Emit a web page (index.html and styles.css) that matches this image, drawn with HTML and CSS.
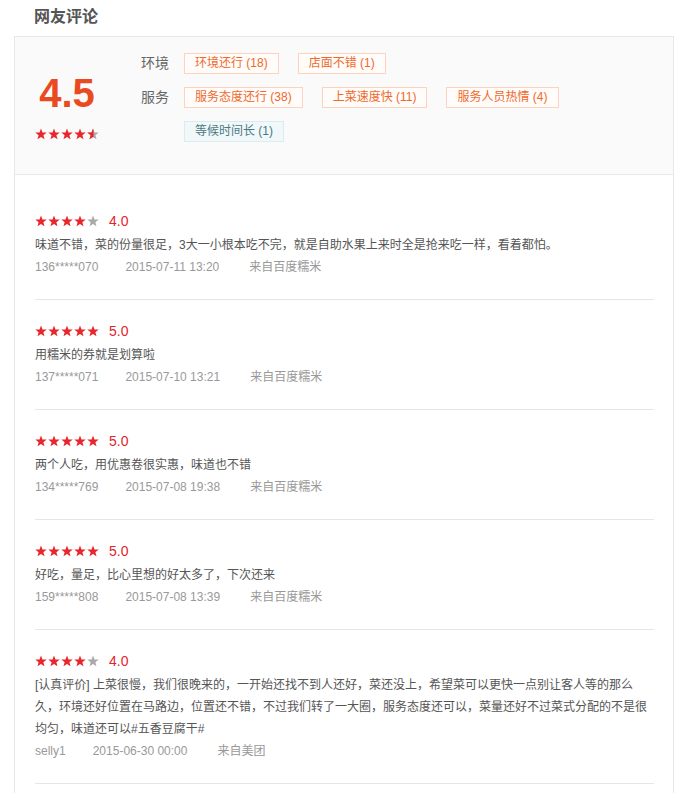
FILE: index.html
```html
<!DOCTYPE html>
<html lang="zh-CN">
<head>
<meta charset="utf-8">
<title>网友评论</title>
<link rel="stylesheet" href="styles.css">
</head>
<body>
<div class="page">
  <h2 class="title">网友评论</h2>
  <div class="card">
    <div class="summary">
      <div class="score">
        <div class="score-num">4.5</div>
        <div class="stars">
          <svg class="star" viewBox="0 0 24 24"><polygon points="12,0.8 14.94,8.75 23.41,9.09 16.76,14.35 19.05,22.5 12,17.8 4.95,22.5 7.24,14.35 0.59,9.09 9.06,8.75"/></svg>
          <svg class="star" viewBox="0 0 24 24"><polygon points="12,0.8 14.94,8.75 23.41,9.09 16.76,14.35 19.05,22.5 12,17.8 4.95,22.5 7.24,14.35 0.59,9.09 9.06,8.75"/></svg>
          <svg class="star" viewBox="0 0 24 24"><polygon points="12,0.8 14.94,8.75 23.41,9.09 16.76,14.35 19.05,22.5 12,17.8 4.95,22.5 7.24,14.35 0.59,9.09 9.06,8.75"/></svg>
          <svg class="star" viewBox="0 0 24 24"><polygon points="12,0.8 14.94,8.75 23.41,9.09 16.76,14.35 19.05,22.5 12,17.8 4.95,22.5 7.24,14.35 0.59,9.09 9.06,8.75"/></svg>
          <svg class="star star-half" viewBox="0 0 24 24"><defs><clipPath id="halfclip"><rect x="0" y="0" width="13" height="24"/></clipPath></defs><polygon class="off" points="12,0.8 14.94,8.75 23.41,9.09 16.76,14.35 19.05,22.5 12,17.8 4.95,22.5 7.24,14.35 0.59,9.09 9.06,8.75"/><polygon clip-path="url(#halfclip)" points="12,0.8 14.94,8.75 23.41,9.09 16.76,14.35 19.05,22.5 12,17.8 4.95,22.5 7.24,14.35 0.59,9.09 9.06,8.75"/></svg>
        </div>
      </div>
      <div class="tags">
        <div class="tag-row">
          <span class="tag-label">环境</span>
          <span class="tag">环境还行 (18)</span>
          <span class="tag">店面不错 (1)</span>
        </div>
        <div class="tag-row">
          <span class="tag-label">服务</span>
          <span class="tag">服务态度还行 (38)</span>
          <span class="tag">上菜速度快 (11)</span>
          <span class="tag">服务人员热情 (4)</span>
        </div>
        <div class="tag-row">
          <span class="tag-label"></span>
          <span class="tag tag-neg">等候时间长 (1)</span>
        </div>
      </div>
    </div>

    <div class="reviews">
      <div class="review">
        <div class="rating">
          <div class="stars">
            <svg class="star" viewBox="0 0 24 24"><polygon points="12,0.8 14.94,8.75 23.41,9.09 16.76,14.35 19.05,22.5 12,17.8 4.95,22.5 7.24,14.35 0.59,9.09 9.06,8.75"/></svg>
            <svg class="star" viewBox="0 0 24 24"><polygon points="12,0.8 14.94,8.75 23.41,9.09 16.76,14.35 19.05,22.5 12,17.8 4.95,22.5 7.24,14.35 0.59,9.09 9.06,8.75"/></svg>
            <svg class="star" viewBox="0 0 24 24"><polygon points="12,0.8 14.94,8.75 23.41,9.09 16.76,14.35 19.05,22.5 12,17.8 4.95,22.5 7.24,14.35 0.59,9.09 9.06,8.75"/></svg>
            <svg class="star" viewBox="0 0 24 24"><polygon points="12,0.8 14.94,8.75 23.41,9.09 16.76,14.35 19.05,22.5 12,17.8 4.95,22.5 7.24,14.35 0.59,9.09 9.06,8.75"/></svg>
            <svg class="star star-off" viewBox="0 0 24 24"><polygon points="12,0.8 14.94,8.75 23.41,9.09 16.76,14.35 19.05,22.5 12,17.8 4.95,22.5 7.24,14.35 0.59,9.09 9.06,8.75"/></svg>
          </div>
          <span class="rating-num">4.0</span>
        </div>
        <p class="comment">味道不错，菜的份量很足，3大一小根本吃不完，就是自助水果上来时全是抢来吃一样，看着都怕。</p>
        <div class="meta"><span class="user">136*****070</span><span class="time">2015-07-11 13:20</span><span class="source">来自百度糯米</span></div>
      </div>

      <div class="review">
        <div class="rating">
          <div class="stars">
            <svg class="star" viewBox="0 0 24 24"><polygon points="12,0.8 14.94,8.75 23.41,9.09 16.76,14.35 19.05,22.5 12,17.8 4.95,22.5 7.24,14.35 0.59,9.09 9.06,8.75"/></svg>
            <svg class="star" viewBox="0 0 24 24"><polygon points="12,0.8 14.94,8.75 23.41,9.09 16.76,14.35 19.05,22.5 12,17.8 4.95,22.5 7.24,14.35 0.59,9.09 9.06,8.75"/></svg>
            <svg class="star" viewBox="0 0 24 24"><polygon points="12,0.8 14.94,8.75 23.41,9.09 16.76,14.35 19.05,22.5 12,17.8 4.95,22.5 7.24,14.35 0.59,9.09 9.06,8.75"/></svg>
            <svg class="star" viewBox="0 0 24 24"><polygon points="12,0.8 14.94,8.75 23.41,9.09 16.76,14.35 19.05,22.5 12,17.8 4.95,22.5 7.24,14.35 0.59,9.09 9.06,8.75"/></svg>
            <svg class="star" viewBox="0 0 24 24"><polygon points="12,0.8 14.94,8.75 23.41,9.09 16.76,14.35 19.05,22.5 12,17.8 4.95,22.5 7.24,14.35 0.59,9.09 9.06,8.75"/></svg>
          </div>
          <span class="rating-num">5.0</span>
        </div>
        <p class="comment">用糯米的券就是划算啦</p>
        <div class="meta"><span class="user">137*****071</span><span class="time">2015-07-10 13:21</span><span class="source">来自百度糯米</span></div>
      </div>

      <div class="review">
        <div class="rating">
          <div class="stars">
            <svg class="star" viewBox="0 0 24 24"><polygon points="12,0.8 14.94,8.75 23.41,9.09 16.76,14.35 19.05,22.5 12,17.8 4.95,22.5 7.24,14.35 0.59,9.09 9.06,8.75"/></svg>
            <svg class="star" viewBox="0 0 24 24"><polygon points="12,0.8 14.94,8.75 23.41,9.09 16.76,14.35 19.05,22.5 12,17.8 4.95,22.5 7.24,14.35 0.59,9.09 9.06,8.75"/></svg>
            <svg class="star" viewBox="0 0 24 24"><polygon points="12,0.8 14.94,8.75 23.41,9.09 16.76,14.35 19.05,22.5 12,17.8 4.95,22.5 7.24,14.35 0.59,9.09 9.06,8.75"/></svg>
            <svg class="star" viewBox="0 0 24 24"><polygon points="12,0.8 14.94,8.75 23.41,9.09 16.76,14.35 19.05,22.5 12,17.8 4.95,22.5 7.24,14.35 0.59,9.09 9.06,8.75"/></svg>
            <svg class="star" viewBox="0 0 24 24"><polygon points="12,0.8 14.94,8.75 23.41,9.09 16.76,14.35 19.05,22.5 12,17.8 4.95,22.5 7.24,14.35 0.59,9.09 9.06,8.75"/></svg>
          </div>
          <span class="rating-num">5.0</span>
        </div>
        <p class="comment">两个人吃，用优惠卷很实惠，味道也不错</p>
        <div class="meta"><span class="user">134*****769</span><span class="time">2015-07-08 19:38</span><span class="source">来自百度糯米</span></div>
      </div>

      <div class="review">
        <div class="rating">
          <div class="stars">
            <svg class="star" viewBox="0 0 24 24"><polygon points="12,0.8 14.94,8.75 23.41,9.09 16.76,14.35 19.05,22.5 12,17.8 4.95,22.5 7.24,14.35 0.59,9.09 9.06,8.75"/></svg>
            <svg class="star" viewBox="0 0 24 24"><polygon points="12,0.8 14.94,8.75 23.41,9.09 16.76,14.35 19.05,22.5 12,17.8 4.95,22.5 7.24,14.35 0.59,9.09 9.06,8.75"/></svg>
            <svg class="star" viewBox="0 0 24 24"><polygon points="12,0.8 14.94,8.75 23.41,9.09 16.76,14.35 19.05,22.5 12,17.8 4.95,22.5 7.24,14.35 0.59,9.09 9.06,8.75"/></svg>
            <svg class="star" viewBox="0 0 24 24"><polygon points="12,0.8 14.94,8.75 23.41,9.09 16.76,14.35 19.05,22.5 12,17.8 4.95,22.5 7.24,14.35 0.59,9.09 9.06,8.75"/></svg>
            <svg class="star" viewBox="0 0 24 24"><polygon points="12,0.8 14.94,8.75 23.41,9.09 16.76,14.35 19.05,22.5 12,17.8 4.95,22.5 7.24,14.35 0.59,9.09 9.06,8.75"/></svg>
          </div>
          <span class="rating-num">5.0</span>
        </div>
        <p class="comment">好吃，量足，比心里想的好太多了，下次还来</p>
        <div class="meta"><span class="user">159*****808</span><span class="time">2015-07-08 13:39</span><span class="source">来自百度糯米</span></div>
      </div>

      <div class="review">
        <div class="rating">
          <div class="stars">
            <svg class="star" viewBox="0 0 24 24"><polygon points="12,0.8 14.94,8.75 23.41,9.09 16.76,14.35 19.05,22.5 12,17.8 4.95,22.5 7.24,14.35 0.59,9.09 9.06,8.75"/></svg>
            <svg class="star" viewBox="0 0 24 24"><polygon points="12,0.8 14.94,8.75 23.41,9.09 16.76,14.35 19.05,22.5 12,17.8 4.95,22.5 7.24,14.35 0.59,9.09 9.06,8.75"/></svg>
            <svg class="star" viewBox="0 0 24 24"><polygon points="12,0.8 14.94,8.75 23.41,9.09 16.76,14.35 19.05,22.5 12,17.8 4.95,22.5 7.24,14.35 0.59,9.09 9.06,8.75"/></svg>
            <svg class="star" viewBox="0 0 24 24"><polygon points="12,0.8 14.94,8.75 23.41,9.09 16.76,14.35 19.05,22.5 12,17.8 4.95,22.5 7.24,14.35 0.59,9.09 9.06,8.75"/></svg>
            <svg class="star star-off" viewBox="0 0 24 24"><polygon points="12,0.8 14.94,8.75 23.41,9.09 16.76,14.35 19.05,22.5 12,17.8 4.95,22.5 7.24,14.35 0.59,9.09 9.06,8.75"/></svg>
          </div>
          <span class="rating-num">4.0</span>
        </div>
        <p class="comment">[认真评价] 上菜很慢，我们很晚来的，一开始还找不到人还好，菜还没上，希望菜可以更快一点别让客人等的那么久，环境还好位置在马路边，位置还不错，不过我们转了一大圈，服务态度还可以，菜量还好不过菜式分配的不是很均匀，味道还可以#五香豆腐干#</p>
        <div class="meta"><span class="user">selly1</span><span class="time">2015-06-30 00:00</span><span class="source">来自美团</span></div>
      </div>
    </div>
  </div>
</div>
</body>
</html>
```

FILE: styles.css
```css
* {
  box-sizing: border-box;
}

html, body {
  margin: 0;
  padding: 0;
  background: #ffffff;
}

body {
  font-family: "Liberation Sans", "Noto Sans CJK SC", Arial, sans-serif;
  font-size: 12px;
  color: #555555;
}

.page {
  padding: 0 0 0 14px;
  width: 674px;
}

.title {
  margin: 0;
  height: 36px;
  line-height: 34px;
  padding-left: 20px;
  font-size: 16px;
  font-weight: bold;
  color: #555555;
}

.card {
  width: 660px;
  border: 1px solid #e8e8e8;
  border-bottom: none;
}

/* summary */
.summary {
  display: flex;
  height: 138px;
  padding: 16px 0 0 20px;
  background: #fafafa;
  border-bottom: 1px solid #e8e8e8;
}

.score {
  width: 64px;
  padding-top: 20px;
  text-align: center;
}

.score-num {
  font-size: 40px;
  line-height: 40px;
  font-weight: bold;
  color: #ea4a1f;
}

.score .stars {
  margin-top: 15px;
}

.stars {
  display: flex;
  align-items: center;
}

.star {
  display: block;
  width: 12px;
  height: 12px;
  margin-right: 1px;
}

.star:last-child {
  margin-right: 0;
}

.star polygon {
  fill: #e8262b;
}

.star-off polygon,
.star polygon.off {
  fill: #aaaaaa;
}

.tags {
  margin-left: 42px;
}

.tag-row {
  display: flex;
  align-items: center;
  height: 21px;
  margin-bottom: 13px;
}

.tag-label {
  width: 43px;
  font-size: 14px;
  line-height: 21px;
  color: #666666;
}

.tag {
  height: 21px;
  line-height: 19px;
  padding: 0 10px;
  margin-right: 19px;
  border: 1px solid #fbd3bf;
  background: #fffcfa;
  color: #ee6a2c;
  font-size: 12px;
  white-space: nowrap;
}

.tag-neg {
  border-color: #d9ecef;
  background: #f1f8f9;
  color: #4a7a84;
}

/* reviews */
.reviews {
  padding: 15px 19px 20px 20px;
}

.review {
  padding: 21px 0;
  border-bottom: 1px solid #e6e6e6;
}

.rating {
  display: flex;
  align-items: center;
  height: 20px;
  margin-bottom: 3px;
}

.rating-num {
  margin-left: 10px;
  font-size: 14px;
  color: #e4232b;
}

.comment {
  margin: 0;
  font-size: 12px;
  line-height: 22px;
  color: #555555;
}

.meta {
  font-size: 12px;
  line-height: 22px;
  color: #999999;
}

.user {
  margin-right: 27px;
}

.time {
  margin-right: 30px;
}
```
